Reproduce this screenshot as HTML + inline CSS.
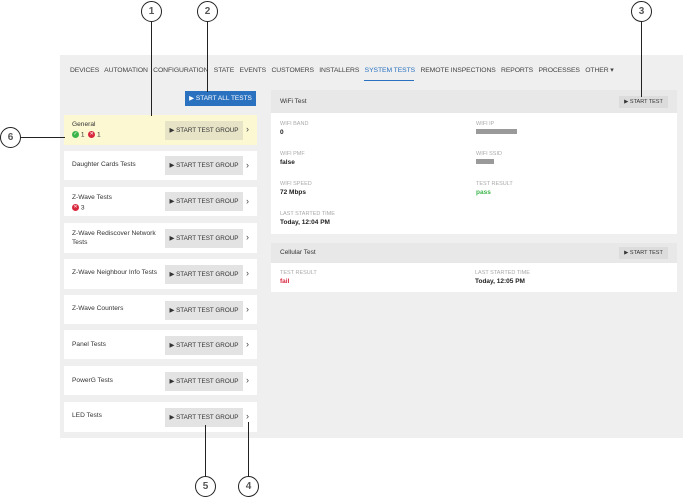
<!DOCTYPE html>
<html><head><style>
body{margin:0;width:683px;height:497px;background:#fff;position:relative;font-family:"Liberation Sans",sans-serif;overflow:hidden}
.a{position:absolute}
.bg{left:60px;top:55px;width:623px;height:383px;background:#efefef}
.nav{top:66px;font-size:6.8px;color:#444;letter-spacing:-0.1px;white-space:nowrap}
.card{left:64px;width:193px;background:#fff}
.card .t{position:absolute;left:8px;font-size:6.6px;color:#333}
.btn{position:absolute;left:101px;width:78px;height:19px;background:#e3e3e3;font-size:6.3px;color:#333;line-height:19px;text-align:center}
.chev{position:absolute;left:182px;font-size:9px;color:#444}
.circ{position:absolute;width:19px;height:19px;border:1px solid #222;border-radius:50%;background:#fff;font-size:10px;font-weight:bold;text-align:center;line-height:19px;color:#555}
.vl{position:absolute;width:1px;background:#222}
.lbl{position:absolute;font-size:5.5px;color:#aaa}
.val{position:absolute;font-size:6.5px;color:#222;font-weight:bold}
.sb{position:absolute;width:49px;height:12px;background:#dcdcdc;font-size:5.5px;line-height:12px;text-align:center;color:#333}
.ok,.er{display:inline-block;width:7px;height:7px;border-radius:50%;vertical-align:middle;color:#fff;font-size:5px;line-height:7px;text-align:center}
.ok{background:#3bb44a}.er{background:#d8263c}
.st{font-size:6px;line-height:8px}
</style></head><body>
<div class="a bg"></div>
<div class="a nav" style="left:70px">DEVICES&nbsp;&nbsp; AUTOMATION&nbsp;&nbsp; CONFIGURATION&nbsp;&nbsp; STATE&nbsp;&nbsp; EVENTS&nbsp;&nbsp; CUSTOMERS&nbsp;&nbsp; INSTALLERS&nbsp;&nbsp; <span style="color:#2a72c0">SYSTEM TESTS</span>&nbsp;&nbsp; REMOTE INSPECTIONS&nbsp;&nbsp; REPORTS&nbsp;&nbsp; PROCESSES&nbsp;&nbsp; OTHER ▾</div>
<div class="a" style="left:364px;top:80px;width:50px;height:1px;background:#2a72c0"></div>
<div class="a" style="left:185px;top:91px;width:71px;height:15px;background:#2a72c0;color:#fff;font-size:6.5px;line-height:15px;text-align:center">▶ START ALL TESTS</div>

<div class="a card" style="top:115px;height:30px;background:#fbf8d2"><div class="t" style="top:6px">General</div><div class="t st" style="top:16px"><span class="ok">✓</span> 1 &nbsp;<span class="er">✕</span> 1</div><div class="btn" style="top:6px;background:#e6e3c6">▶ START TEST GROUP</div><div class="chev" style="top:9px">›</div></div>
<div class="a card" style="top:151px;height:29px"><div class="t" style="top:10px">Daughter Cards Tests</div><div class="btn" style="top:5px">▶ START TEST GROUP</div><div class="chev" style="top:9px">›</div></div>
<div class="a card" style="top:187px;height:29px"><div class="t" style="top:7px">Z-Wave Tests</div><div class="t st" style="top:17px"><span class="er">✕</span> 3</div><div class="btn" style="top:5px">▶ START TEST GROUP</div><div class="chev" style="top:9px">›</div></div>
<div class="a card" style="top:223px;height:30px"><div class="t" style="top:6px;width:95px;line-height:9px">Z-Wave Rediscover Network Tests</div><div class="btn" style="top:6px">▶ START TEST GROUP</div><div class="chev" style="top:9px">›</div></div>
<div class="a card" style="top:259px;height:30px"><div class="t" style="top:10px">Z-Wave Neighbour Info Tests</div><div class="btn" style="top:6px">▶ START TEST GROUP</div><div class="chev" style="top:9px">›</div></div>
<div class="a card" style="top:295px;height:29px"><div class="t" style="top:10px">Z-Wave Counters</div><div class="btn" style="top:6px">▶ START TEST GROUP</div><div class="chev" style="top:9px">›</div></div>
<div class="a card" style="top:330px;height:29px"><div class="t" style="top:11px">Panel Tests</div><div class="btn" style="top:6px">▶ START TEST GROUP</div><div class="chev" style="top:9px">›</div></div>
<div class="a card" style="top:366px;height:29px"><div class="t" style="top:11px">PowerG Tests</div><div class="btn" style="top:6px">▶ START TEST GROUP</div><div class="chev" style="top:9px">›</div></div>
<div class="a card" style="top:402px;height:30px"><div class="t" style="top:10px">LED Tests</div><div class="btn" style="top:6px">▶ START TEST GROUP</div><div class="chev" style="top:9px">›</div></div>

<div class="a" style="left:271px;top:90px;width:406px;height:144px;background:#fff">
<div class="a" style="left:0;top:0;width:406px;height:23px;background:#e8e8e8"></div>
<div class="a" style="left:9px;top:8px;font-size:6.5px;color:#333">WiFi Test</div>
<div class="sb" style="left:348px;top:6px">▶ START TEST</div>
<div class="lbl" style="left:9px;top:31px">WIFI BAND</div><div class="val" style="left:9px;top:39px">0</div>
<div class="lbl" style="left:205px;top:31px">WIFI IP</div><div class="a" style="left:205px;top:39px;width:41px;height:5px;background:#9a9a9a"></div>
<div class="lbl" style="left:9px;top:61px">WIFI PMF</div><div class="val" style="left:9px;top:69px">false</div>
<div class="lbl" style="left:205px;top:61px">WIFI SSID</div><div class="a" style="left:205px;top:69px;width:18px;height:5px;background:#9a9a9a"></div>
<div class="lbl" style="left:9px;top:91px">WIFI SPEED</div><div class="val" style="left:9px;top:99px">72 Mbps</div>
<div class="lbl" style="left:205px;top:91px">TEST RESULT</div><div class="val" style="left:205px;top:99px;color:#3bb44a">pass</div>
<div class="lbl" style="left:9px;top:121px">LAST STARTED TIME</div><div class="val" style="left:9px;top:129px">Today, 12:04 PM</div>
</div>
<div class="a" style="left:271px;top:243px;width:406px;height:49px;background:#fff">
<div class="a" style="left:0;top:0;width:406px;height:20px;background:#e8e8e8"></div>
<div class="a" style="left:9px;top:6px;font-size:6.5px;color:#333">Cellular Test</div>
<div class="sb" style="left:348px;top:4px">▶ START TEST</div>
<div class="lbl" style="left:9px;top:27px">TEST RESULT</div><div class="val" style="left:9px;top:35px;color:#d8263c">fail</div>
<div class="lbl" style="left:204px;top:27px">LAST STARTED TIME</div><div class="val" style="left:204px;top:35px">Today, 12:05 PM</div>
</div>

<div class="vl" style="left:151px;top:20px;height:96px"></div>
<div class="vl" style="left:207px;top:20px;height:72px"></div>
<div class="vl" style="left:641px;top:20px;height:77px"></div>
<div class="a" style="left:20px;top:137px;width:45px;height:1px;background:#222"></div>
<div class="vl" style="left:205px;top:425px;height:53px"></div>
<div class="vl" style="left:248px;top:422px;height:56px"></div>
<div class="circ" style="left:141px;top:1px">1</div>
<div class="circ" style="left:197px;top:1px">2</div>
<div class="circ" style="left:631px;top:1px">3</div>
<div class="circ" style="left:0px;top:127px">6</div>
<div class="circ" style="left:195px;top:476px">5</div>
<div class="circ" style="left:238px;top:476px">4</div>
</body></html>
